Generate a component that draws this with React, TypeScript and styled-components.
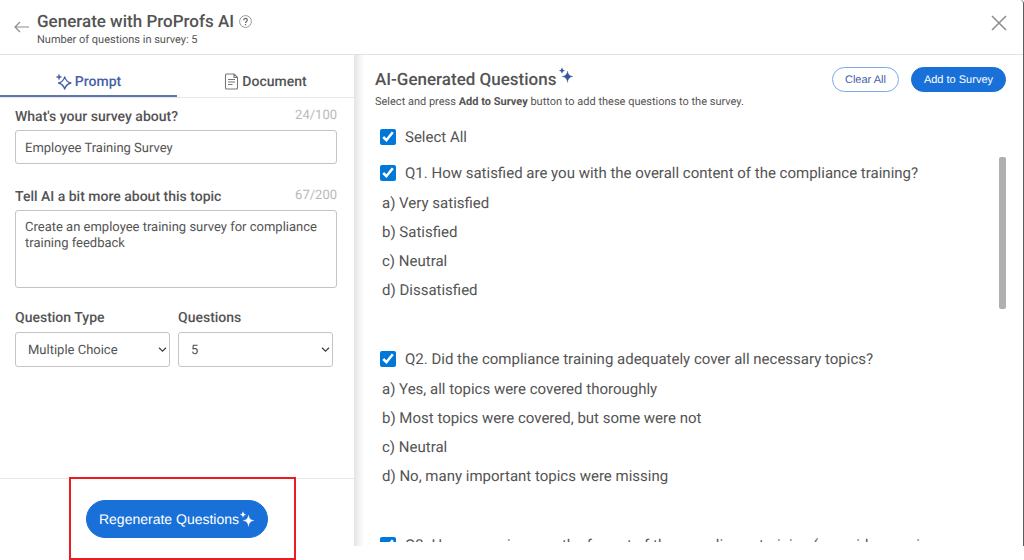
import React from "react";
import styled, { createGlobalStyle, css } from "styled-components";

const GlobalStyle = createGlobalStyle`
  *, *::before, *::after { box-sizing: border-box; }
  html { background: #fff; }
  body {
    margin: 0;
    font-family: Roboto, "Liberation Sans", sans-serif;
    font-size: 14px;
    color: #545454;
    background: #fff;
    text-rendering: geometricPrecision;
  }
  h1, h2, h3, p, ol { margin: 0; padding: 0; }
  button, input, select, textarea { font: inherit; color: inherit; text-rendering: inherit; }
`;

const Page = styled.div`
  position: relative;
  display: flex;
  flex-direction: column;
  height: 100vh;
  padding-bottom: 14px;
  overflow: hidden;
`;

const Dialog = styled.main`
  flex: 1;
  min-height: 0;
  display: flex;
  flex-direction: column;
  border-right: 1px solid #5c5d60;
  border-top-right-radius: 4px;
`;

const Header = styled.header`
  display: flex;
  align-items: flex-start;
  height: 55px;
  padding: 11px 16px 0 13px;
  border-bottom: 1px solid #e3e3e3;
`;

const IconButton = styled.button`
  display: flex;
  padding: 0;
  border: 0;
  background: none;
  color: #8c8c8c;
  cursor: pointer;
`;

const BackButton = styled(IconButton)`
  padding-top: 8px;
  margin-right: 8px;
`;

const CloseButton = styled(IconButton)`
  margin-left: auto;
  padding-top: 4px;
`;

const TitleRow = styled.div`
  display: flex;
  align-items: center;
  gap: 5px;
  height: 21px;
`;

const Title = styled.h1`
  font-size: 17px;
  line-height: 22px;
  font-weight: 500;
`;

const Subtitle = styled.p`
  font-size: 11px;
  line-height: 15px;
`;

const Columns = styled.div`
  flex: 1;
  min-height: 0;
  display: flex;
`;

const Sidebar = styled.section`
  flex: 0 0 354px;
  display: flex;
  flex-direction: column;
`;

const Tabs = styled.div`
  display: flex;
  height: 43px;
  border-bottom: 1px solid #e6e6e6;
`;

const Tab = styled.button<{ $active?: boolean }>`
  flex: 1;
  display: flex;
  align-items: center;
  justify-content: center;
  gap: 3px;
  height: 42px;
  padding: 13px 0 0;
  border: 0;
  border-bottom: 2px solid transparent;
  background: none;
  font-size: 14px;
  font-weight: 500;
  cursor: pointer;
  ${({ $active }) =>
    $active &&
    css`
      color: #4560a8;
      border-bottom-color: #5d77b5;
    `}
`;

const Form = styled.form`
  flex: 1;
  display: flex;
  flex-direction: column;
  padding: 8px 17px 0 15px;
`;

const LabelRow = styled.div`
  display: flex;
  justify-content: space-between;
  height: 24px;
  line-height: 20px;
`;

const Label = styled.label`
  font-size: 14px;
  line-height: 22px;
  font-weight: 500;
`;

const Counter = styled.span`
  color: #b9b9b9;
  font-size: 13px;
`;

const fieldStyle = css`
  width: 100%;
  border: 1px solid #c4c4c4;
  border-radius: 3px;
  background: #fff;
  font-size: 13px;
  outline: 0;
`;

const TextInput = styled.input`
  ${fieldStyle}
  height: 34px;
  padding: 2px 9px 0;
  margin-bottom: 22px;
`;

const TextArea = styled.textarea`
  ${fieldStyle}
  display: block;
  height: 78px;
  padding: 9px;
  margin: 0 0 19px;
  line-height: 16px;
  resize: none;
`;

const SelectRow = styled.div`
  display: grid;
  grid-template-columns: 1fr 1fr;
  gap: 8px;
  padding-right: 4px;
`;

const SelectBox = styled.div`
  display: flex;
  flex-direction: column;
  gap: 3px;
`;

const SelectWrap = styled.div`
  display: grid;
  align-items: center;
  & > * { grid-area: 1 / 1; }
  & > svg { justify-self: end; margin-right: 3px; pointer-events: none; }
`;

const Select = styled.select`
  ${fieldStyle}
  appearance: none;
  height: 35px;
  padding: 2px 12px 0;
`;

const SidebarFooter = styled.footer`
  display: flex;
  justify-content: center;
  height: 68px;
  padding-top: 21px;
  border-top: 1px solid #e6e6e6;
`;

const Pill = styled.button<{ $outline?: boolean }>`
  display: flex;
  align-items: center;
  justify-content: center;
  height: 25px;
  padding: 0 12px;
  border: 1px solid ${({ $outline }) => ($outline ? "#79abe8" : "#1970d8")};
  border-radius: 20px;
  background: ${({ $outline }) => ($outline ? "#fff" : "#1970d8")};
  color: ${({ $outline }) => ($outline ? "#4560a8" : "#fff")};
  font-family: "Liberation Sans", Arial, sans-serif;
  font-size: 11px;
  white-space: nowrap;
  cursor: pointer;
`;

const RegenerateButton = styled(Pill)`
  height: 38px;
  font-size: 14px;
`;

const Results = styled.section`
  flex: 1;
  min-width: 0;
  display: flex;
  flex-direction: column;
  padding: 12px 17px 4px 21px;
  background: linear-gradient(to right, #e4e4e4, #fff 10px);
`;

const ResultsHeader = styled.div`
  display: flex;
  justify-content: space-between;
`;

const ResultsTitle = styled.h2`
  display: flex;
  font-size: 17px;
  line-height: 27px;
  font-weight: 500;
`;

const Hint = styled.p`
  font-size: 11px;
  line-height: 15px;
`;

const Actions = styled.div`
  display: flex;
  gap: 12px;
`;

const CheckLabel = styled.label`
  display: flex;
  align-items: center;
  gap: 9px;
  height: 28px;
  padding-left: 5px;
  font-size: 15px;
  white-space: nowrap;
`;

const Checkbox = styled.input`
  width: 16px;
  height: 16px;
  margin: 0;
  accent-color: #0078d7;
`;

const SelectAll = styled.div`
  padding: 14px 0 6px;
`;

const Scroller = styled.div`
  flex: 1;
  min-height: 0;
  display: flex;
  justify-content: space-between;
  overflow: hidden;
`;

const QuestionList = styled.div`
  flex: 1;
  min-width: 0;
  padding-top: 2px;
`;

const Question = styled.article`
  margin-bottom: 40px;
`;

const Answers = styled.ol`
  padding: 2px 0 0 7px;
  list-style: none;
  font-size: 15px;
  line-height: 29px;
`;

const Thumb = styled.div`
  width: 7px;
  height: 152px;
  border-radius: 2px;
  background: #b0b0b0;
`;

const Highlight = styled.div`
  position: absolute;
  left: 69px;
  bottom: 0;
  width: 227px;
  height: 83px;
  border: 2px solid #ea1c24;
  pointer-events: none;
`;

const Sparkles = () => (
  <svg width="16" height="16" viewBox="0 0 16 16" fill="currentColor" aria-hidden="true">
    <path d="M9.500 4Q10 9 15 9.500Q10 10 9.500 15.500Q9 10 4 9.500Q9 9 9.500 4Z" stroke="currentColor" strokeWidth=".3" />
    <path d="M4 .5Q4.300 3.200 7 3.500Q4.300 3.800 4 6.500Q3.700 3.800 1 3.500Q3.700 3.200 4 .5Z" stroke="currentColor" strokeWidth=".1" />
  </svg>
);

const TitleSparkles = styled.span`
  display: flex;
  padding-left: 2px;
  color: #34549c;
`;

const PromptIcon = () => (
  <svg width="16" height="16" viewBox="0 0 16 16" fill="none" stroke="currentColor" strokeWidth="1.300" aria-hidden="true">
    <path strokeLinejoin="round" d="M8.700 2.800Q10 7.700 14.900 9Q10 10.300 8.700 15.200Q7.400 10.300 2.500 9Q7.400 7.700 8.700 2.800Z" />
    <path d="M3 .5v5M.5 3h5" strokeWidth="1.500" />
  </svg>
);

const DocumentIcon = () => (
  <svg width="15" height="17" viewBox="0 0 15 17" fill="none" stroke="#777" strokeWidth="1.100" aria-hidden="true">
    <path strokeLinejoin="round" d="M2.500 1h7.500l3.500 3.500v10.500a1 1 0 0 1-1 1h-10a1 1 0 0 1-1-1v-13a1 1 0 0 1 1-1zM10 1v3.500h3.500" />
    <path d="M4 6.500h7M4 9h7M4 11.500h4.500" />
  </svg>
);

const BackIcon = () => (
  <svg width="16" height="16" viewBox="0 0 16 16" fill="none" stroke="currentColor" strokeWidth="1.200" aria-hidden="true">
    <path d="M16 8H2M7 3L2 8l5 5" />
  </svg>
);

const CloseIcon = () => (
  <svg width="16" height="16" viewBox="0 0 16 16" fill="none" stroke="currentColor" strokeWidth="1.500" aria-hidden="true">
    <path d="M1 1l14 14M15 1L1 15" />
  </svg>
);

const HelpIcon = () => (
  <svg width="13" height="13" viewBox="0 0 13 13" fill="none" stroke="currentColor" aria-hidden="true">
    <circle cx="6.500" cy="6.500" r="5.900" strokeWidth=".9" />
    <path d="M4.700 5.200c0-2.400 3.600-2.300 3.600-.1 0 1.300-1.800 1.400-1.800 2.900M6.500 8.900v1.300" stroke="#666" strokeWidth="1.200" />
  </svg>
);

const Chevron = () => (
  <svg width="9" height="9" viewBox="0 0 9 9" fill="none" stroke="#444" strokeWidth="1.300" aria-hidden="true">
    <path d="M1 2.800l3.500 3.400L8 2.800" />
  </svg>
);

const questions = [
  {
    text: "Q1. How satisfied are you with the overall content of the compliance training?",
    answers: ["a) Very satisfied", "b) Satisfied", "c) Neutral", "d) Dissatisfied"],
  },
  {
    text: "Q2. Did the compliance training adequately cover all necessary topics?",
    answers: [
      "a) Yes, all topics were covered thoroughly",
      "b) Most topics were covered, but some were not",
      "c) Neutral",
      "d) No, many important topics were missing",
    ],
  },
  {
    text: "Q3. How engaging was the format of the compliance training (e.g., videos, quizzes,",
    answers: [],
  },
];

export default function App() {
  return (
    <>
      <GlobalStyle />
      <Page>
        <Dialog>
          <Header>
            <BackButton type="button" aria-label="Back">
              <BackIcon />
            </BackButton>
            <div>
              <TitleRow>
                <Title>Generate with ProProfs AI</Title>
                <IconButton type="button" aria-label="Help">
                  <HelpIcon />
                </IconButton>
              </TitleRow>
              <Subtitle>Number of questions in survey: 5</Subtitle>
            </div>
            <CloseButton type="button" aria-label="Close">
              <CloseIcon />
            </CloseButton>
          </Header>
          <Columns>
            <Sidebar>
              <Tabs role="tablist">
                <Tab type="button" role="tab" aria-selected="true" $active>
                  <PromptIcon />
                  Prompt
                </Tab>
                <Tab type="button" role="tab" aria-selected="false">
                  <DocumentIcon />
                  Document
                </Tab>
              </Tabs>
              <Form>
                <LabelRow>
                  <Label htmlFor="about">What's your survey about?</Label>
                  <Counter>24/100</Counter>
                </LabelRow>
                <TextInput id="about" defaultValue="Employee Training Survey" />
                <LabelRow>
                  <Label htmlFor="topic">Tell AI a bit more about this topic</Label>
                  <Counter>67/200</Counter>
                </LabelRow>
                <TextArea
                  id="topic"
                  defaultValue="Create an employee training survey for compliance training feedback"
                />
                <SelectRow>
                  <SelectBox>
                    <Label htmlFor="type">Question Type</Label>
                    <SelectWrap>
                      <Select id="type">
                        <option>Multiple Choice</option>
                      </Select>
                      <Chevron />
                    </SelectWrap>
                  </SelectBox>
                  <SelectBox>
                    <Label htmlFor="count">Questions</Label>
                    <SelectWrap>
                      <Select id="count">
                        <option>5</option>
                      </Select>
                      <Chevron />
                    </SelectWrap>
                  </SelectBox>
                </SelectRow>
              </Form>
              <SidebarFooter>
                <RegenerateButton type="button">
                  Regenerate Questions
                  <Sparkles />
                </RegenerateButton>
              </SidebarFooter>
            </Sidebar>
            <Results>
              <ResultsHeader>
                <div>
                  <ResultsTitle>
                    AI-Generated Questions
                    <TitleSparkles>
                      <Sparkles />
                    </TitleSparkles>
                  </ResultsTitle>
                  <Hint>
                    Select and press <b>Add to Survey</b> button to add these questions to the survey.
                  </Hint>
                </div>
                <Actions>
                  <Pill type="button" $outline>
                    Clear All
                  </Pill>
                  <Pill type="button">Add to Survey</Pill>
                </Actions>
              </ResultsHeader>
              <SelectAll>
                <CheckLabel>
                  <Checkbox type="checkbox" defaultChecked />
                  Select All
                </CheckLabel>
              </SelectAll>
              <Scroller>
                <QuestionList>
                  {questions.map((q) => (
                    <Question key={q.text}>
                      <CheckLabel>
                        <Checkbox type="checkbox" defaultChecked />
                        {q.text}
                      </CheckLabel>
                      <Answers>
                        {q.answers.map((a) => (
                          <li key={a}>{a}</li>
                        ))}
                      </Answers>
                    </Question>
                  ))}
                </QuestionList>
                <Thumb />
              </Scroller>
            </Results>
          </Columns>
        </Dialog>
        <Highlight />
      </Page>
    </>
  );
}
